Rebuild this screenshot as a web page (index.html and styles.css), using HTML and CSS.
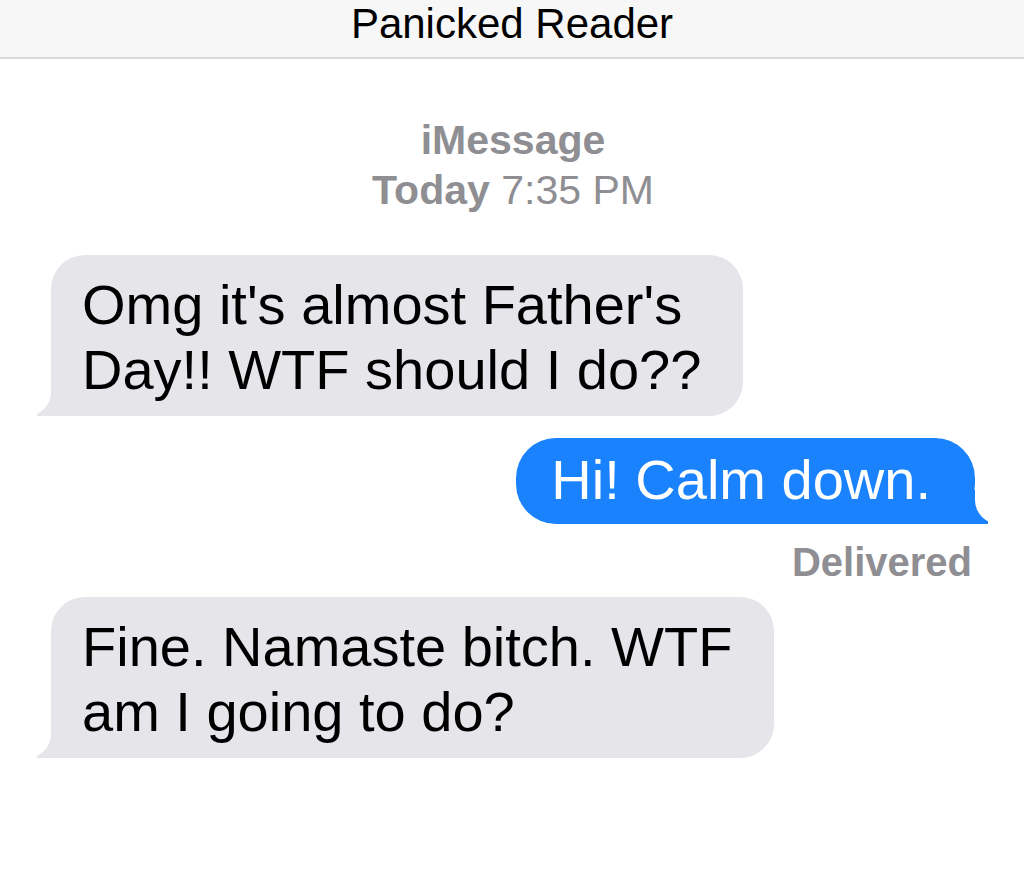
FILE: index.html
```html
<!DOCTYPE html>
<html lang="en">
<head>
    <meta charset="UTF-8">
    <meta name="viewport" content="width=device-width, initial-scale=1.0">
    <title>Panicked Reader</title>
    <link rel="stylesheet" href="styles.css">
</head>
<body>
    <header class="nav">
        <h1 class="nav-title">Panicked Reader</h1>
    </header>

    <main class="thread">
        <div class="meta">
            <div class="service">iMessage</div>
            <div class="stamp"><b>Today</b> 7:35 PM</div>
        </div>

        <div class="bubble in">Omg it's almost Father's<br>Day!! WTF should I do??</div>
        <div class="bubble out">Hi! Calm down.</div>
        <div class="status">Delivered</div>
        <div class="bubble in last">Fine. Namaste bitch. WTF<br>am I going to do?</div>
    </main>
</body>
</html>
```

FILE: styles.css
```css
body {
    margin: 0;
    background-color: #fff;
    font-family: "Liberation Sans", Arial, sans-serif;
}
.nav {
    height: 57px;
    background-color: #f7f7f7;
    border-bottom: 2px solid #d9d9d9;
    text-align: center;
}
.nav-title {
    margin: 0;
    font-size: 42px;
    font-weight: normal;
    line-height: 47px;
    color: #000;
}
.thread {
    display: flex;
    flex-direction: column;
    padding: 56px 49px 0 51px;
}
.meta {
    align-self: center;
    text-align: center;
    color: #8e8e93;
    font-size: 41px;
    line-height: 50px;
}
.service {
    font-weight: bold;
}
.bubble {
    position: relative;
    z-index: 0;
    padding: 17px 42px 14px 31px;
    font-size: 56px;
    line-height: 65px;
    border-radius: 34px;
}
.bubble.in {
    align-self: flex-start;
    margin-top: 40px;
    background-color: #e5e5ea;
    color: #000;
}
.bubble.in.last {
    margin-top: 15px;
}
.bubble.out {
    align-self: flex-end;
    margin-top: 22px;
    padding: 9px 44px 12px 35px;
    border-radius: 40px;
    background-color: #1982fc;
    color: #fff;
}
/* tails, kept under the text */
.bubble::before,
.bubble::after {
    content: "";
    position: absolute;
    z-index: -1;
    bottom: 0;
    height: 34px;
}
.bubble.in::before {
    left: -14px;
    width: 54px;
    background-color: #e5e5ea;
}
.bubble.in::after {
    left: -60px;
    width: 60px;
    background-color: #fff;
    border-bottom-right-radius: 24px;
}
.bubble.out::before {
    right: -13px;
    width: 58px;
    background-color: #1982fc;
}
.bubble.out::after {
    right: -60px;
    width: 60px;
    background-color: #fff;
    border-bottom-left-radius: 24px;
}
.status {
    align-self: flex-end;
    margin-top: 18px;
    margin-right: 3px;
    color: #8e8e93;
    font-size: 40px;
    font-weight: bold;
    line-height: 40px;
}
```
